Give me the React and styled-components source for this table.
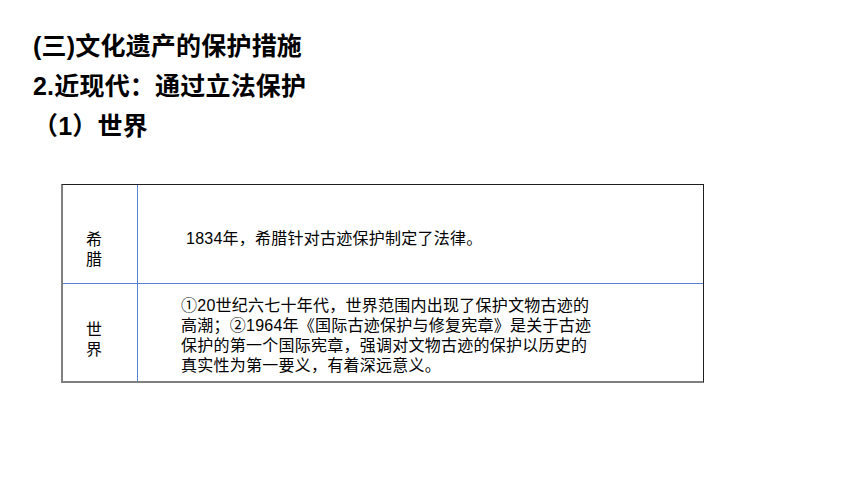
import React from "react";
import styled, { createGlobalStyle } from "styled-components";

const GlobalStyle = createGlobalStyle`
	html, body {
		margin: 0;
		padding: 0;
		background: #ffffff;
	}
	body {
		font-family: "Liberation Sans", "Noto Sans CJK SC", sans-serif;
		color: #000000;
	}
`;

const Page = styled.div`
	width: 860px;
	height: 484px;
	box-sizing: border-box;
	padding: 26px 0 0 33px;
	overflow: hidden;
`;

const Heading = styled.div`
	font-size: 25px;
	font-weight: 700;
	line-height: 40px;
	letter-spacing: 0.2px;
	white-space: nowrap;
`;

const Table = styled.div`
	display: grid;
	grid-template-columns: 75px 1fr;
	grid-template-rows: 99px 97px;
	width: 643px;
	box-sizing: border-box;
	margin: 38px 0 0 28px;
	border-top: 1px solid #1f1f1f;
	border-right: 1px solid #1f1f1f;
	border-left: 2px solid #7f7f7f;
	border-bottom: 2px solid #7f7f7f;
`;

const Cell = styled.div`
	box-sizing: border-box;
	font-size: 16px;
	line-height: 20px;
	letter-spacing: 0.25px;
	white-space: nowrap;
	padding-top: ${({ top }) => top}px;
	padding-left: ${({ left }) => left}px;
	border-bottom: ${({ last }) => (last ? "none" : "1px solid #5584d4")};
`;

const LabelCell = styled(Cell)`
	border-right: 1px solid #5584d4;
`;

const Line = styled.div``;

const rows = [
	{
		label: ["希", "腊"],
		labelTop: 45,
		lines: ["1834年，希腊针对古迹保护制定了法律。"],
		textTop: 44,
		textLeft: 48,
	},
	{
		label: ["世", "界"],
		labelTop: 36,
		lines: [
			"①20世纪六七十年代，世界范围内出现了保护文物古迹的",
			"高潮；②1964年《国际古迹保护与修复宪章》是关于古迹",
			"保护的第一个国际宪章，强调对文物古迹的保护以历史的",
			"真实性为第一要义，有着深远意义。",
		],
		textTop: 12,
		textLeft: 43,
	},
];

export default function App() {
	return (
		<>
			<GlobalStyle />
			<Page>
				<Heading>(三)文化遗产的保护措施</Heading>
				<Heading>2.近现代：通过立法保护</Heading>
				<Heading>（1）世界</Heading>
				<Table>
					{rows.map((row, i) => {
						const last = i === rows.length - 1;
						return (
							<React.Fragment key={i}>
								<LabelCell top={row.labelTop} left={23} last={last}>
									{row.label.map((ch) => (
										<Line key={ch}>{ch}</Line>
									))}
								</LabelCell>
								<Cell top={row.textTop} left={row.textLeft} last={last}>
									{row.lines.map((text) => (
										<Line key={text}>{text}</Line>
									))}
								</Cell>
							</React.Fragment>
						);
					})}
				</Table>
			</Page>
		</>
	);
}
